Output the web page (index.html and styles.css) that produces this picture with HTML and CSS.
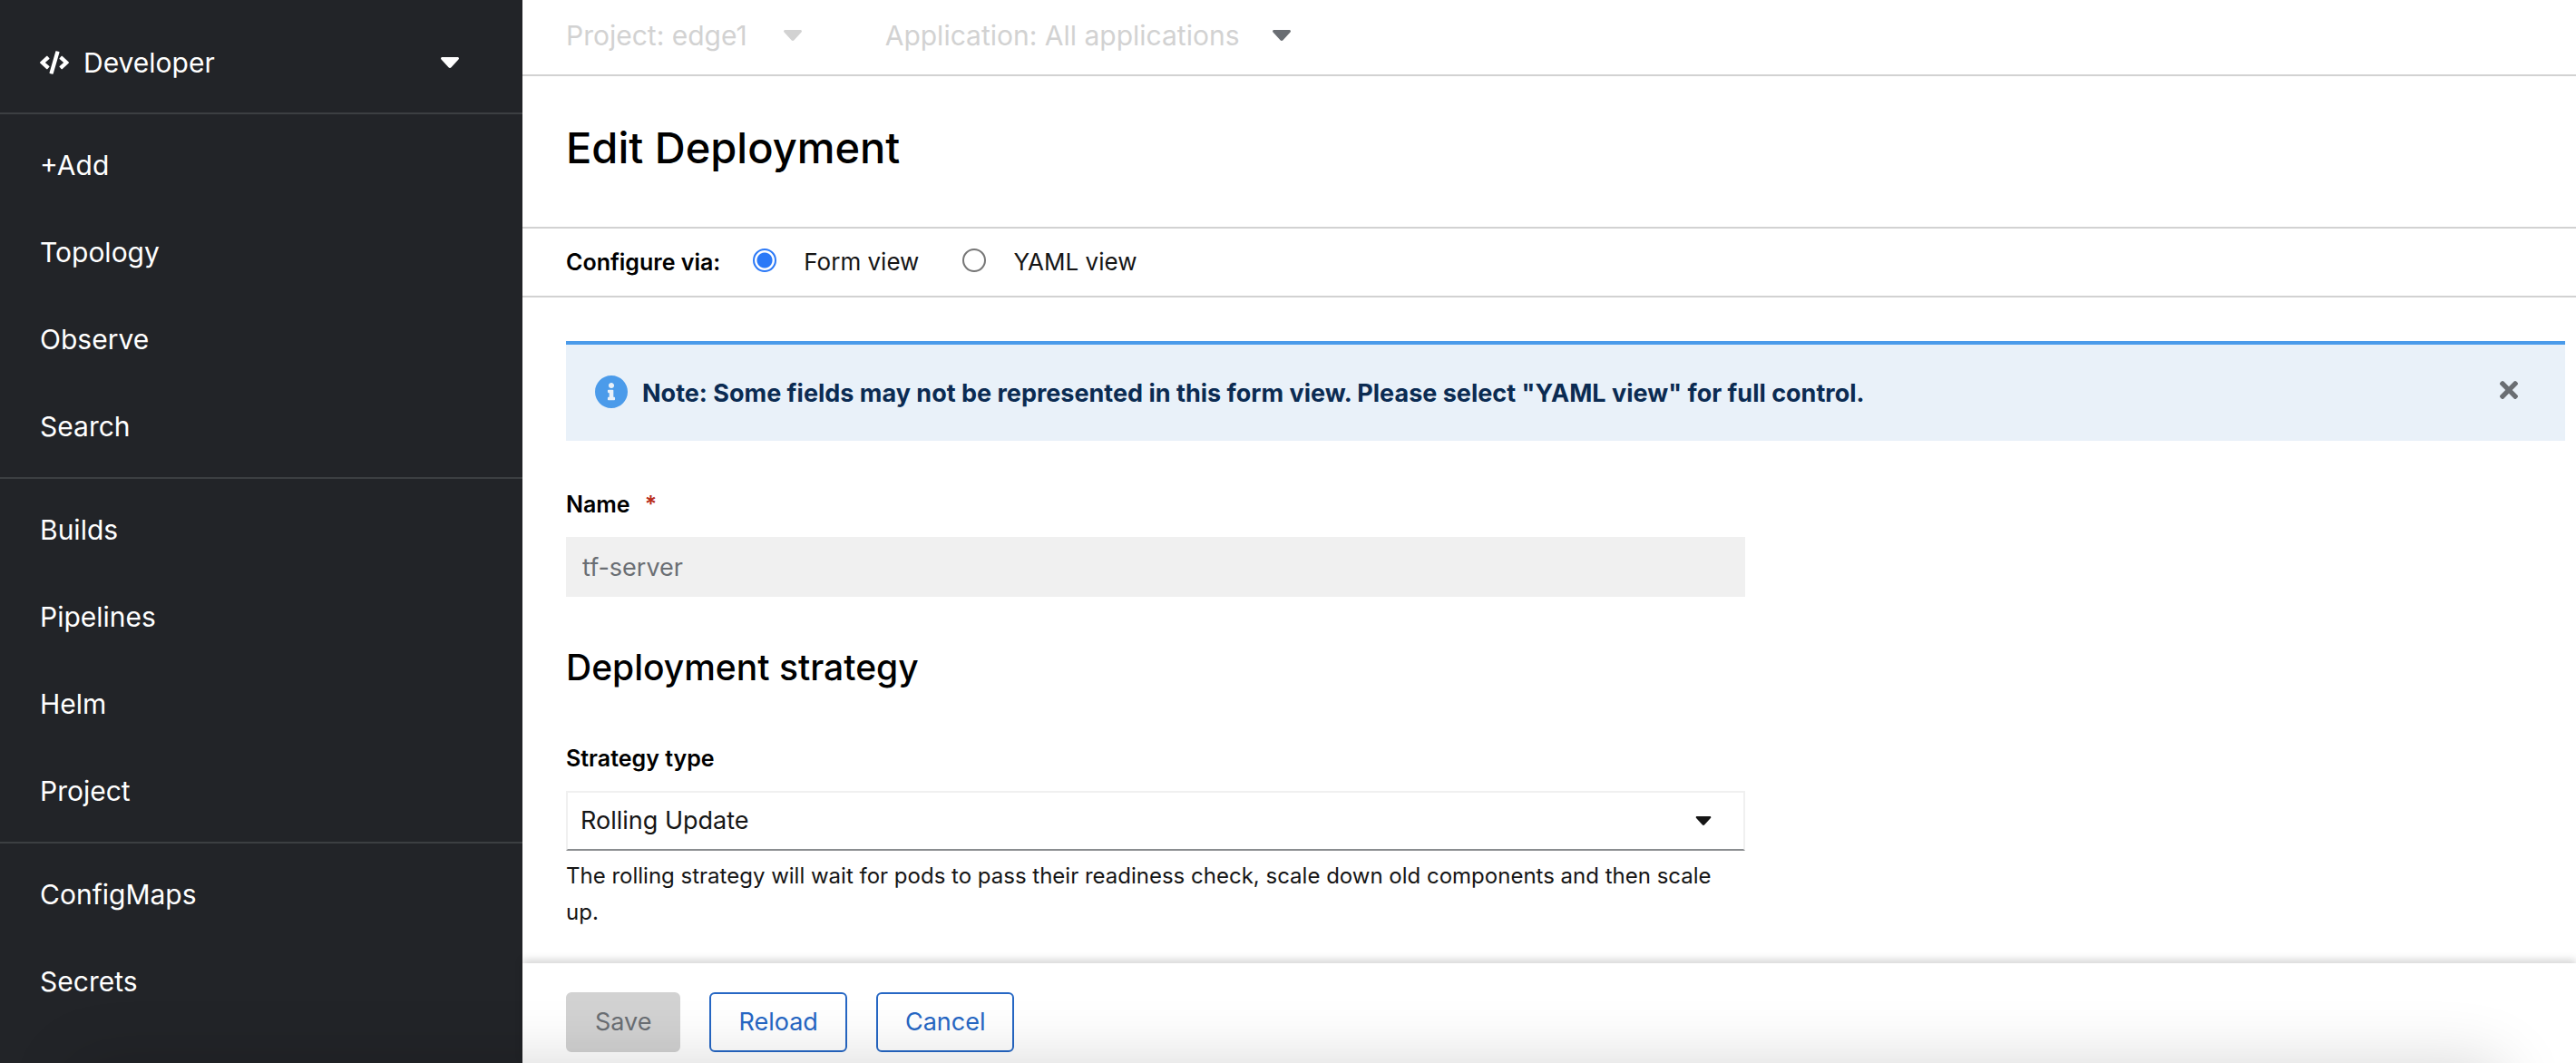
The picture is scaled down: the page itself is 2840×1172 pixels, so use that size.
FILE: index.html
```html
<!DOCTYPE html>
<html lang="en">
<head>
<meta charset="utf-8">
<meta name="viewport" content="width=device-width, initial-scale=1">
<title>Edit Deployment</title>
<link rel="stylesheet" href="styles.css">
</head>
<body>
<div class="page">
  <nav class="sidebar" aria-label="Main navigation">
    <button class="perspective" type="button">
      <svg class="icon-code" viewBox="0 0 640 512" aria-hidden="true"><path d="M278.900 511.500l-61-17.700c-6.400-1.800-10-8.500-8.200-14.900L346.200 8.700c1.800-6.400 8.500-10 14.900-8.200l61 17.700c6.400 1.800 10 8.500 8.200 14.900L293.800 503.300c-1.900 6.400-8.500 10.100-14.900 8.200zm-114-112.200l43.500-46.400c4.600-4.900 4.300-12.700-.8-17.200L117 256l90.600-79.700c5.100-4.500 5.500-12.300.8-17.200l-43.500-46.400c-4.500-4.800-12.100-5.100-17-.5L3.800 247.200c-5.100 4.700-5.100 12.800 0 17.500l144.100 135.100c4.900 4.600 12.500 4.400 17-.5zm327.200.6l144.100-135.100c5.100-4.700 5.100-12.800 0-17.500L492.100 112.100c-4.800-4.500-12.400-4.300-17 .5L431.600 159c-4.600 4.900-4.300 12.700.8 17.200L523 256l-90.600 79.700c-5.100 4.500-5.500 12.300-.8 17.200l43.500 46.400c4.500 4.900 12.100 5.100 17 .6z"/></svg>
      <span class="perspective-label">Developer</span>
      <svg class="caret" viewBox="0 0 20 12" aria-hidden="true"><path d="M1.500 0h17c1.300 0 2 1.500 1 2.500l-8 8.700c-.8.900-2.200.9-3 0l-8-8.700C-.4 1.500.2 0 1.500 0z"/></svg>
    </button>
    <ul class="nav-group">
      <li><a href="#">+Add</a></li>
      <li><a href="#">Topology</a></li>
      <li><a href="#">Observe</a></li>
      <li><a href="#">Search</a></li>
    </ul>
    <ul class="nav-group">
      <li><a href="#">Builds</a></li>
      <li><a href="#">Pipelines</a></li>
      <li><a href="#">Helm</a></li>
      <li><a href="#">Project</a></li>
    </ul>
    <ul class="nav-group">
      <li><a href="#">ConfigMaps</a></li>
      <li><a href="#">Secrets</a></li>
    </ul>
  </nav>

  <main class="main">
    <div class="context-bar">
      <button class="context-toggle" type="button" disabled>
        <span>Project: edge1</span>
        <svg class="caret" viewBox="0 0 20 12" aria-hidden="true"><path d="M1.500 0h17c1.300 0 2 1.500 1 2.500l-8 8.700c-.8.900-2.200.9-3 0l-8-8.700C-.4 1.500.2 0 1.500 0z"/></svg>
      </button>
      <button class="context-toggle context-toggle-app" type="button" disabled>
        <span>Application: All applications</span>
        <svg class="caret" viewBox="0 0 20 12" aria-hidden="true"><path d="M1.500 0h17c1.300 0 2 1.500 1 2.500l-8 8.700c-.8.900-2.200.9-3 0l-8-8.700C-.4 1.500.2 0 1.500 0z"/></svg>
      </button>
    </div>

    <header class="page-header">
      <h1>Edit Deployment</h1>
    </header>

    <div class="view-switch" role="radiogroup" aria-labelledby="configure-label">
      <span class="view-switch-label" id="configure-label">Configure via:</span>
      <label class="view-option"><input type="radio" name="view" checked><span>Form view</span></label>
      <label class="view-option"><input type="radio" name="view"><span>YAML view</span></label>
    </div>

    <form class="form">
      <div class="form-body">
        <div class="alert">
          <svg class="icon-info" viewBox="8 8 496 496" aria-hidden="true"><path d="M256 8C119 8 8 119.100 8 256c0 137 111 248 248 248s248-111 248-248C504 119.100 393 8 256 8zm0 110c23.200 0 42 18.800 42 42s-18.800 42-42 42-42-18.800-42-42 18.800-42 42-42zm56 254c0 6.600-5.400 12-12 12h-88c-6.600 0-12-5.400-12-12v-24c0-6.600 5.400-12 12-12h12v-64h-12c-6.600 0-12-5.400-12-12v-24c0-6.600 5.400-12 12-12h64c6.600 0 12 5.400 12 12v100h12c6.600 0 12 5.400 12 12v24z"/></svg>
          <p class="alert-title">Note: Some fields may not be represented in this form view. Please select "YAML view" for full control.</p>
          <button class="alert-close" type="button" aria-label="Close note">
            <svg viewBox="0 80 352 352" aria-hidden="true"><path d="M242.700 256l100.100-100.100c12.300-12.300 12.300-32.200 0-44.500l-22.200-22.200c-12.300-12.300-32.200-12.300-44.500 0L176 189.300 75.900 89.200c-12.300-12.300-32.200-12.300-44.500 0L9.200 111.500c-12.300 12.300-12.300 32.200 0 44.500L109.300 256 9.200 356.100c-12.300 12.300-12.300 32.200 0 44.500l22.200 22.200c12.300 12.300 32.200 12.300 44.500 0L176 322.700l100.100 100.100c12.300 12.300 32.200 12.300 44.500 0l22.200-22.200c12.300-12.300 12.300-32.200 0-44.500L242.700 256z"/></svg>
          </button>
        </div>

        <div class="fields">
          <div class="field">
            <label class="field-label" for="name">Name<span class="required" aria-hidden="true">*</span></label>
            <input class="text-input" id="name" type="text" value="tf-server" required disabled>
          </div>

          <h2>Deployment strategy</h2>

          <div class="field">
            <label class="field-label" for="strategy">Strategy type</label>
            <div class="select">
              <select id="strategy" aria-describedby="strategy-help">
                <option>Rolling Update</option>
                <option>Recreate</option>
              </select>
              <svg class="caret" viewBox="0 0 20 12" aria-hidden="true"><path d="M1.500 0h17c1.300 0 2 1.500 1 2.500l-8 8.700c-.8.900-2.200.9-3 0l-8-8.700C-.4 1.500.2 0 1.500 0z"/></svg>
            </div>
            <p class="help" id="strategy-help">The rolling strategy will wait for pods to pass their readiness check, scale down old components and then scale up.</p>
          </div>
        </div>
      </div>

      <footer class="actions">
        <button class="button button-primary" type="submit" disabled>Save</button>
        <button class="button" type="button">Reload</button>
        <button class="button" type="button">Cancel</button>
      </footer>
    </form>
  </main>
</div>
<div class="edge-shadow" aria-hidden="true"></div>
</body>
</html>
```
FILE: styles.css
```css
*,
*::before,
*::after {
  box-sizing: border-box;
}

body {
  margin: 0;
  background: #fff;
  color: #151515;
  font-family: Inter, "Liberation Sans", sans-serif;
  font-size: 27px;
  line-height: 40px;
}

button,
input,
select {
  font: inherit;
  color: inherit;
}

h1,
h2,
p,
ul {
  margin: 0;
  padding: 0;
}

h1,
h2 {
  color: #000;
  font-weight: 500;
}

.page {
  display: flex;
  height: 100vh;
}

.caret {
  flex: none;
  width: 20px;
  height: 12px;
  fill: currentColor;
}

/* Sidebar */

.sidebar {
  flex: none;
  width: 576px;
  overflow: hidden;
  background: #222428;
  color: #fff;
  font-size: 30px;
}

.perspective {
  display: flex;
  align-items: center;
  width: 100%;
  height: 124px;
  padding: 14px 70px 0 44px;
  border: 0;
  background: none;
}

.icon-code {
  width: 32px;
  height: 26px;
  margin-right: 16px;
  fill: currentColor;
}

.perspective-label {
  flex: 1;
  text-align: left;
}

.nav-group {
  padding: 8px 0;
  border-top: 2px solid #3c3f42;
  list-style: none;
}

.nav-group a {
  display: flex;
  align-items: center;
  height: 96px;
  padding: 0 44px;
  color: inherit;
  text-decoration: none;
}

/* Main column */

.main {
  display: flex;
  flex: 1;
  flex-direction: column;
  min-width: 0;
}

.context-bar {
  display: flex;
  align-items: center;
  gap: 92px;
  height: 84px;
  padding: 0 48px 4px;
  border-bottom: 2px solid #d2d2d2;
  font-size: 30px;
}

.context-toggle {
  display: flex;
  align-items: center;
  gap: 40px;
  padding: 0;
  border: 0;
  background: none;
  color: #d2d2d2;
}

.context-toggle-app {
  gap: 36px;
}

.context-toggle-app .caret {
  color: #6a6e73;
}

.page-header {
  padding: 44px 48px 52px;
  border-bottom: 2px solid #d2d2d2;
}

h1 {
  font-size: 47px;
  line-height: 70px;
}

.view-switch {
  display: flex;
  align-items: center;
  height: 76px;
  padding: 0 48px;
  border-bottom: 2px solid #d2d2d2;
  font-size: 26px;
}

.view-switch-label {
  margin-right: 36px;
  color: #000;
  font-weight: 600;
  font-size: 25px;
}

.view-option {
  display: flex;
  align-items: center;
  gap: 30px;
  margin-right: 48px;
}

.view-option input {
  width: 26px;
  height: 26px;
  margin: 0 0 4px;
  appearance: none;
  border: 2px solid #767676;
  border-radius: 50%;
  background: #fff;
}

.view-option input:checked {
  border-color: #2b79f7;
  background: radial-gradient(circle, #2b79f7 8px, #fff 9px);
}

/* Form */

.form {
  display: flex;
  flex: 1;
  flex-direction: column;
  min-height: 0;
}

.form-body {
  flex: 1;
  min-height: 0;
  padding: 48px 12px 0 48px;
  overflow: hidden;
}

.alert {
  display: flex;
  align-items: flex-start;
  padding: 34px 52px 32px 32px;
  border-top: 4px solid #4b9bea;
  background: #e9f1f9;
}

.icon-info {
  width: 36px;
  height: 36px;
  margin-right: 16px;
  fill: #4b9bea;
}

.alert-title {
  flex: 1;
  color: #0b2b52;
  font-weight: 700;
  font-size: 27px;
}

.alert-close {
  display: flex;
  padding: 6px 0;
  border: 0;
  background: none;
}

.alert-close svg {
  width: 20px;
  height: 20px;
  fill: #6a6e73;
}

.fields {
  max-width: 1300px;
  padding-top: 50px;
}

.field-label {
  display: block;
  margin-bottom: 16px;
  color: #000;
  font-weight: 600;
  font-size: 25px;
}

.required {
  margin-left: 16px;
  color: #b92d1c;
}

.text-input {
  display: block;
  width: 100%;
  height: 66px;
  padding: 0 18px;
  border: 0;
  border-radius: 0;
  background: #f0f0f0;
  color: #6a6e73;
}

h2 {
  margin: 48px 0 50px;
  font-size: 39px;
  line-height: 60px;
}

.select {
  display: flex;
  align-items: center;
}

.select select {
  flex: 1;
  width: 100%;
  height: 66px;
  padding: 0 14px;
  appearance: none;
  border: 2px solid #f0f0f0;
  border-bottom-color: #8a8d90;
  border-radius: 0;
  background: #fff;
}

.select .caret {
  width: 18px;
  height: 10px;
  margin: 0 37px 0 -55px;
  pointer-events: none;
}

.help {
  margin-top: 8px;
  font-size: 24px;
}

/* Actions */

.actions {
  display: flex;
  gap: 32px;
  padding: 32px 48px 12px;
  background: #fff;
  box-shadow: 0 -4px 8px rgba(0, 0, 0, 0.16);
}

.button {
  height: 66px;
  padding: 0 30px;
  border: 2px solid #2667c4;
  border-radius: 6px;
  background: #fff;
  color: #2667c4;
}

.button-primary:disabled {
  border-color: #d2d2d2;
  background: #d2d2d2;
  color: #6a6e73;
}

/* Soft shade along the lower edge of the window */

.edge-shadow {
  position: fixed;
  top: 100%;
  right: 80px;
  left: 80px;
  height: 200px;
  border-radius: 20px;
  box-shadow: 0 0 72px rgba(0, 0, 0, 0.16);
  pointer-events: none;
}
```
